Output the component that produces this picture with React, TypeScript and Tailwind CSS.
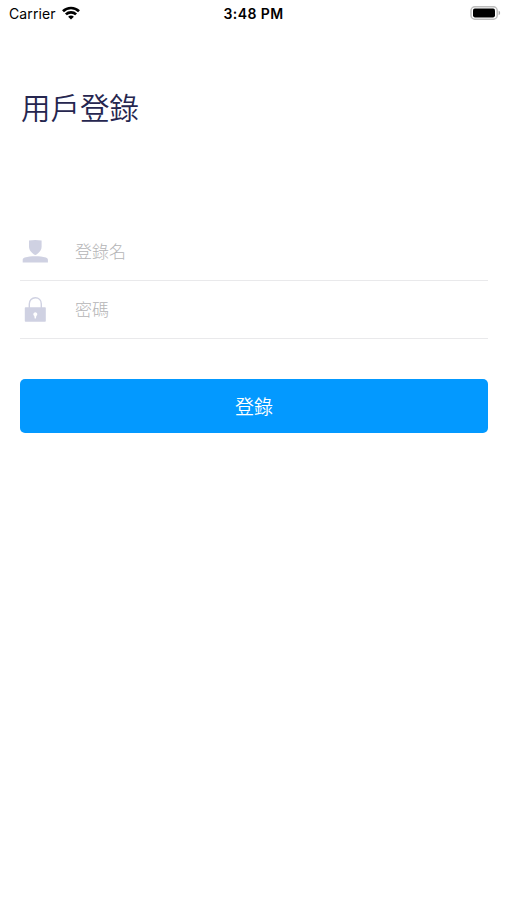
import type { ReactNode } from 'react';

function WifiIcon() {
  return (
    <svg className="ml-[6px] h-[14px] w-[18px]" viewBox="0 0 18 14" fill="none" stroke="#000" strokeWidth="2.7">
      <path d="M1 5.2C5.4 .9 12.6 .9 17 5.2" />
      <path d="M3.9 8.4c2.8-2.7 7.4-2.7 10.2 0" />
      <path d="M9 13.6 6.1 10.8c1.6-1.6 4.2-1.6 5.8 0Z" fill="#000" stroke="none" />
    </svg>
  );
}

function BatteryIcon() {
  return (
    <svg className="h-[14px] w-[31px]" viewBox="0 0 31 14" fill="none">
      <rect x="1" y=".8" width="26.2" height="12.4" rx="3.8" stroke="#bdbdbd" strokeWidth="1.5" />
      <rect x="3" y="2.6" width="22" height="8.8" rx="1.8" fill="#000" />
      <path d="M28.6 4.8c2 .5 2 3.9 0 4.4Z" fill="#a8a8a8" />
    </svg>
  );
}

function UserIcon() {
  return (
    <svg className="h-[28px] w-[30px] shrink-0" viewBox="0 0 30 28" fill="#cfd1e2">
      <path d="M9 2.6c4-.8 8.6-.8 12.6 0v5.8c0 3.900-2.800 6.700-6.300 8.700C11.800 15.100 9 12.300 9 8.400Z" />
      <path d="M2.700 24.500v-2.400c0-1.300.7-2.100 2-2.500 3.300-1.100 6.500-1.300 10.600-1.300s7.300.2 10.600 1.300c1.300.4 2 1.200 2 2.500v2.400Z" />
    </svg>
  );
}

function LockIcon() {
  return (
    <svg className="h-[28px] w-[30px] shrink-0" viewBox="0 0 30 28" fill="none">
      <path d="M9.300 13V8c0-3.600 2.500-6.200 6-6.200s6 2.600 6 6.200v5" stroke="#cfd1e2" strokeWidth="1.400" />
      <rect x="4.800" y="11.200" width="21" height="14.500" rx=".8" fill="#cfd1e2" />
      <path d="M15.300 16.200a2.100 2.100 0 0 1 1 3.900l-.4 2.400h-1.200l-.4-2.400a2.100 2.100 0 0 1 1-3.900Z" fill="#fff" />
    </svg>
  );
}

function Field({ icon, type, placeholder }: { icon: ReactNode; type: string; placeholder: string }) {
  return (
    <label className="flex h-[58px] items-center border-b border-[#e9e9eb]">
      {icon}
      <input
        type={type}
        placeholder={placeholder}
        className="ml-[25px] min-w-0 flex-1 bg-transparent pt-[3px] text-[17px] font-light text-gray-900 outline-none placeholder:text-[#b4b4b6]"
      />
    </label>
  );
}

export default function App() {
  return (
    <div className="min-h-screen bg-white font-['Inter','Noto_Sans_CJK_TC',sans-serif]">
      <header className="grid h-[26px] grid-cols-[1fr_auto_1fr] items-center px-[6px] text-black">
        <div className="flex items-center pl-[3px] text-[14px] tracking-[0.1px]">
          Carrier
          <WifiIcon />
        </div>
        <div className="text-center text-[14px] font-semibold tracking-[0.4px]">3:48 PM</div>
        <div className="flex justify-end">
          <BatteryIcon />
        </div>
      </header>

      <main className="pl-5 pr-[19px] pt-[60px]">
        <h1 className="pl-px text-[29.5px] leading-[45px] font-[350] text-[#26264f]">用戶登錄</h1>
        <form className="mt-[92px]" onSubmit={(e) => e.preventDefault()}>
          <Field icon={<UserIcon />} type="text" placeholder="登錄名" />
          <Field icon={<LockIcon />} type="password" placeholder="密碼" />
          <button
            type="submit"
            className="mt-10 h-[54px] w-full rounded-[5px] bg-[#0399ff] pt-1 text-[19px] font-[350] text-white"
          >
            登錄
          </button>
        </form>
      </main>
    </div>
  );
}
